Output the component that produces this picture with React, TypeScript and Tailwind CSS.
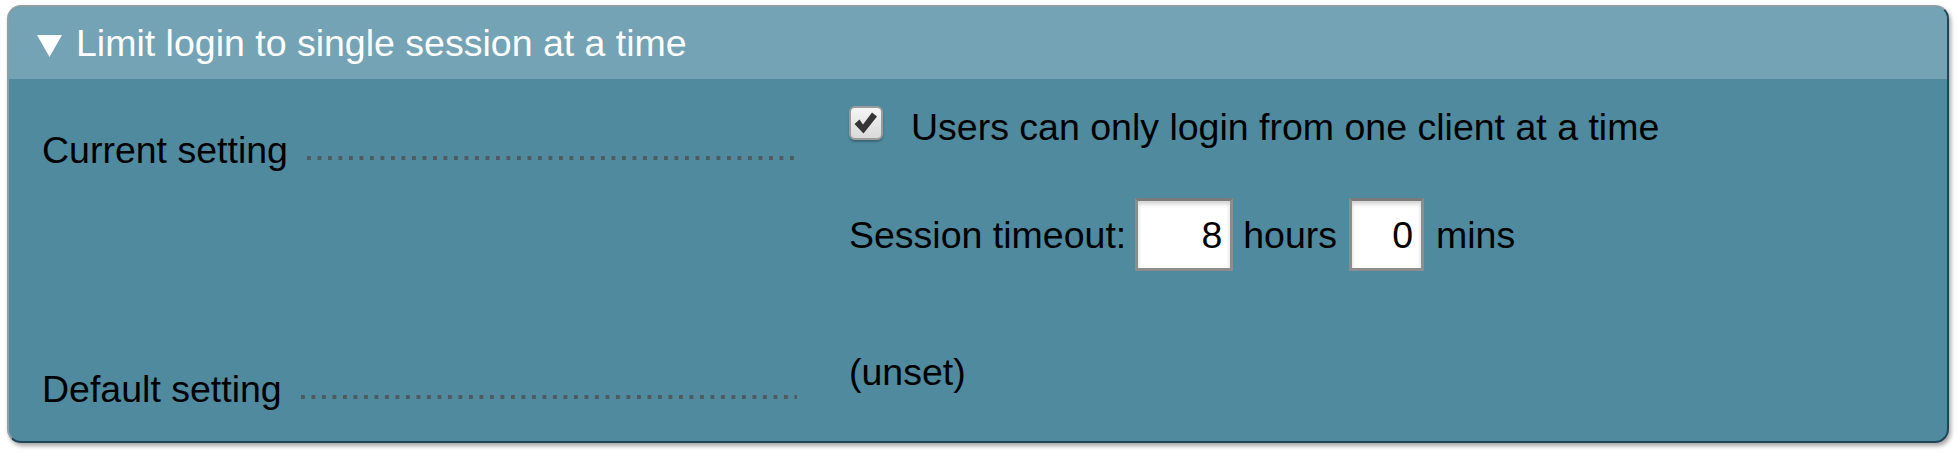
import React from "react";

const font = { fontFamily: '"Liberation Sans", Arial, sans-serif' };

function Leader() {
  return (
    <div className="ml-[19px] mb-[11px] h-[4px] flex-1 bg-[linear-gradient(to_right,#4f5a5e_4px,transparent_4px)] bg-[length:10.5px_4px] bg-repeat-x" />
  );
}

function Checkbox() {
  return (
    <div className="flex h-[34px] w-[34px] shrink-0 items-center justify-center rounded-[6px] border-2 border-[#9c9c9c] bg-[linear-gradient(to_bottom,#f6f6f6,#d9d9d9)] shadow-[0_2px_2px_rgba(0,0,0,0.25)]">
      <svg width="26" height="26" viewBox="0 0 26 26">
        <path d="M1.5 14 L6.5 9.5 L10 14.5 L19 2.5 L24 6.5 L10.5 23.5 Z" fill="#353535" />
      </svg>
    </div>
  );
}

function NumberBox({ value, width }: { value: string; width: string }) {
  return (
    <div
      className={`flex h-[73px] ${width} items-center justify-end border-[3px] border-[#8d8d8d] border-t-[#7a7a7a] bg-white pr-[8px] shadow-[inset_0_3px_4px_rgba(0,0,0,0.18)]`}
    >
      {value}
    </div>
  );
}

export default function App() {
  return (
    <div className="min-h-[453px] bg-white pl-[7px] pr-[8px] pt-[5px]" style={font}>
      <div className="overflow-hidden rounded-[14px] border-2 border-[#8e9fa6] border-b-[#1f4656] border-r-[#1f4656] bg-[#4f8a9f] shadow-[2px_3px_4px_rgba(0,0,0,0.35)]">
        <div className="flex h-[72px] items-center bg-[#73a3b5] pl-[28px] text-[37.5px] leading-[42px] text-white">
          <svg width="25" height="22" viewBox="0 0 25 22" className="mr-[14px] mt-[6px]">
            <path d="M0 0 H25 L12.5 22 Z" fill="#ffffff" />
          </svg>
          <span>Limit login to single session at a time</span>
        </div>

        <div className="h-[362px] text-[37.5px] leading-[42px] text-black">
          <div className="flex items-start">
            <div className="flex w-[840px] items-end pl-[33px] pr-[52px] pt-[50px]">
              <span>Current setting</span>
              <Leader />
            </div>
            <div className="flex flex-1 flex-col pt-[27px]">
              <div className="flex h-[42px] items-start">
                <Checkbox />
                <span className="ml-[28px]">Users can only login from one client at a time</span>
              </div>
              <div className="mt-[50px] flex items-center">
                <span>Session timeout:</span>
                <div className="ml-[9px]">
                  <NumberBox value="8" width="w-[98px]" />
                </div>
                <span className="ml-[10px]">hours</span>
                <div className="ml-[12px]">
                  <NumberBox value="0" width="w-[75px]" />
                </div>
                <span className="ml-[12px]">mins</span>
              </div>
            </div>
          </div>

          <div className="mt-[80px] flex items-start">
            <div className="flex w-[840px] items-end pl-[33px] pr-[52px] pt-[17px]">
              <span>Default setting</span>
              <Leader />
            </div>
            <div className="flex-1">
              <span>(unset)</span>
            </div>
          </div>
        </div>
      </div>
    </div>
  );
}
